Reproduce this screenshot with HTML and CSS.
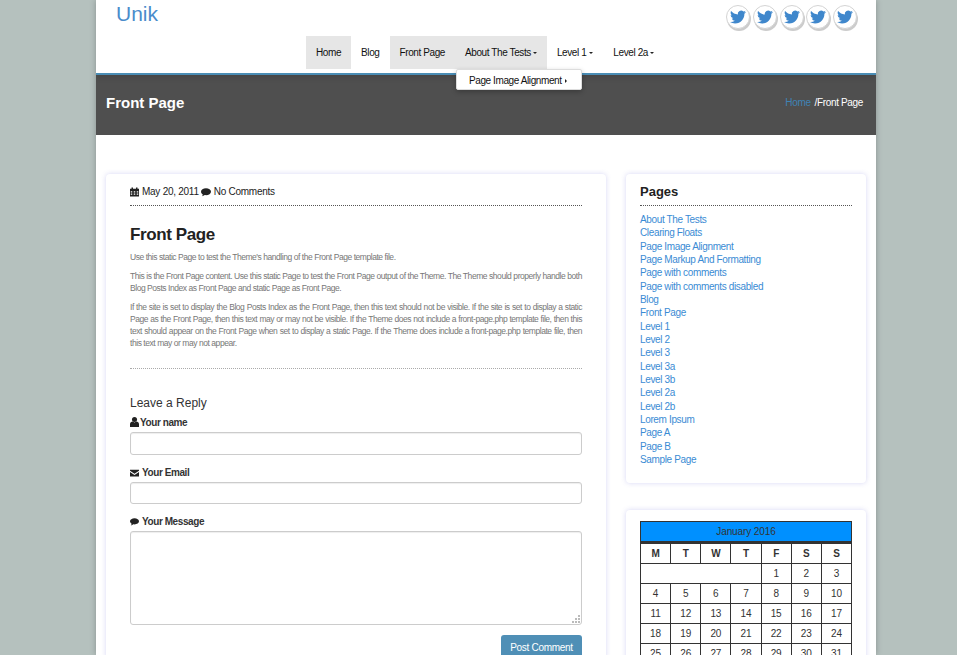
FILE: index.html
```html
<!DOCTYPE html>
<html lang="en">
<head>
<meta charset="utf-8">
<title>Front Page – Unik</title>
<link rel="stylesheet" href="styles.css">
</head>
<body>
<svg class="defs" width="0" height="0" aria-hidden="true">
  <defs>
    <symbol id="bird" viewBox="0 0 24 24"><path d="M23.953 4.57a10 10 0 01-2.825.775 4.958 4.958 0 002.163-2.723c-.951.555-2.005.959-3.127 1.184a4.92 4.92 0 00-8.384 4.482C7.69 8.095 4.067 6.13 1.64 3.162a4.822 4.822 0 00-.666 2.475c0 1.71.87 3.213 2.188 4.096a4.904 4.904 0 01-2.228-.616v.06a4.923 4.923 0 003.946 4.827 4.996 4.996 0 01-2.212.085 4.936 4.936 0 004.604 3.417 9.867 9.867 0 01-6.102 2.105c-.39 0-.779-.023-1.17-.067a13.995 13.995 0 007.557 2.209c9.053 0 13.998-7.496 13.998-13.985 0-.21 0-.42-.015-.63A9.935 9.935 0 0024 4.59z"/></symbol>
    <symbol id="bubble" viewBox="0 0 12 10"><path d="M6 0C2.7 0 0 1.8 0 4.1c0 1.3.9 2.5 2.2 3.2-.1.8-.6 1.6-1.2 2.2 1.3-.1 2.6-.6 3.5-1.4.5.1 1 .1 1.5.1 3.3 0 6-1.8 6-4.1S9.300 0 6 0z"/></symbol>
  </defs>
</svg>
<div class="page">
  <header class="site-header">
    <div class="brand-row">
      <a class="logo" href="#">Unik</a>
      <div class="social">
        <a class="soc" href="#"><svg><use href="#bird"/></svg></a>
        <a class="soc" href="#"><svg><use href="#bird"/></svg></a>
        <a class="soc" href="#"><svg><use href="#bird"/></svg></a>
        <a class="soc" href="#"><svg><use href="#bird"/></svg></a>
        <a class="soc" href="#"><svg><use href="#bird"/></svg></a>
      </div>
    </div>
    <nav class="nav">
      <a class="nav-item on" href="#">Home</a>
      <a class="nav-item" href="#">Blog</a>
      <a class="nav-item on" href="#">Front Page</a>
      <div class="nav-drop">
        <a class="nav-item on" href="#">About The Tests<i class="caret"></i></a>
        <div class="menu"><a href="#">Page Image Alignment<i class="caret-r"></i></a></div>
      </div>
      <a class="nav-item" href="#">Level 1<i class="caret sp"></i></a>
      <a class="nav-item" href="#">Level 2a<i class="caret"></i></a>
    </nav>
  </header>
  <section class="band">
    <h1>Front Page</h1>
    <div class="crumbs"><a href="#">Home</a><span>/Front Page</span></div>
  </section>
  <div class="columns">
    <main class="card main">
      <div class="meta">
        <svg class="ic" viewBox="0 0 12 12"><path d="M0 3h12v9H0zM2 0h2v2.500H2zM8 0h2v2.500H8zM0 1.500h12V3H0z"/><path fill="#fff" d="M1 5h2v1.500H1zM5 5h2v1.500H5zM9 5h2v1.500H9zM1 8h2v1.500H1zM5 8h2v1.500H5zM9 8h2v1.500H9z"/></svg>
        <span>May 20, 2011</span>
        <svg class="ic bub"><use href="#bubble"/></svg>
        <span>No Comments</span>
      </div>
      <h2>Front Page</h2>
      <div class="body">
        <p>Use this static Page to test the Theme's handling of the Front Page template file.</p>
        <p>This is the Front Page content. Use this static Page to test the Front Page output of the Theme. The Theme should properly handle both Blog Posts Index as Front Page and static Page as Front Page.</p>
        <p>If the site is set to display the Blog Posts Index as the Front Page, then this text should not be visible. If the site is set to display a static Page as the Front Page, then this text may or may not be visible. If the Theme does not include a front-page.php template file, then this text should appear on the Front Page when set to display a static Page. If the Theme does include a front-page.php template file, then this text may or may not appear.</p>
      </div>
      <div class="rule"></div>
      <h3>Leave a Reply</h3>
      <form class="form">
        <label><svg class="ic person" viewBox="0 0 10 11"><circle cx="5" cy="2.800" r="2.800"/><path d="M0 11V8c0-2 1.500-3 3-3l2 1 2-1c1.500 0 3 1 3 3v3z"/></svg>Your name</label>
        <div class="input"></div>
        <label><svg class="ic wide" viewBox="0 0 12 9"><path d="M0 0h12v1.500L6 5.500 0 1.500zM0 3l6 4 6-4v6H0z"/></svg>Your Email</label>
        <div class="input"></div>
        <label><svg class="ic wide"><use href="#bubble"/></svg>Your Message</label>
        <div class="input area"><svg class="grip" width="9" height="9"><path fill="#bbb" d="M7 1h2v2H7zM4 4h2v2H4zM7 4h2v2H7zM1 7h2v2H1zM4 7h2v2H4zM7 7h2v2H7z"/></svg></div>
        <div class="actions"><button type="button" class="btn">Post Comment</button></div>
      </form>
    </main>
    <aside class="side">
      <section class="card widget">
        <h4>Pages</h4>
        <ul class="links">
          <li><a href="#">About The Tests</a></li>
          <li><a href="#">Clearing Floats</a></li>
          <li><a href="#">Page Image Alignment</a></li>
          <li><a href="#">Page Markup And Formatting</a></li>
          <li><a href="#">Page with comments</a></li>
          <li><a href="#">Page with comments disabled</a></li>
          <li><a href="#">Blog</a></li>
          <li><a href="#">Front Page</a></li>
          <li><a href="#">Level 1</a></li>
          <li><a href="#">Level 2</a></li>
          <li><a href="#">Level 3</a></li>
          <li><a href="#">Level 3a</a></li>
          <li><a href="#">Level 3b</a></li>
          <li><a href="#">Level 2a</a></li>
          <li><a href="#">Level 2b</a></li>
          <li><a href="#">Lorem Ipsum</a></li>
          <li><a href="#">Page A</a></li>
          <li><a href="#">Page B</a></li>
          <li><a href="#">Sample Page</a></li>
        </ul>
      </section>
      <section class="card cal-card">
        <table class="cal">
          <caption>January 2016</caption>
          <thead><tr><th>M</th><th>T</th><th>W</th><th>T</th><th>F</th><th>S</th><th>S</th></tr></thead>
          <tbody>
            <tr><td colspan="4"></td><td>1</td><td>2</td><td>3</td></tr>
            <tr><td>4</td><td>5</td><td>6</td><td>7</td><td>8</td><td>9</td><td>10</td></tr>
            <tr><td>11</td><td>12</td><td>13</td><td>14</td><td>15</td><td>16</td><td>17</td></tr>
            <tr><td>18</td><td>19</td><td>20</td><td>21</td><td>22</td><td>23</td><td>24</td></tr>
            <tr><td>25</td><td>26</td><td>27</td><td>28</td><td>29</td><td>30</td><td>31</td></tr>
          </tbody>
        </table>
      </section>
    </aside>
  </div>
</div>
</body>
</html>
```
FILE: styles.css
```css
* { box-sizing: border-box; }
html, body { height: 655px; overflow: hidden; }
body { margin: 0; background: #b5c1be; font-family: "Liberation Sans", Arial, sans-serif; color: #222; }
a { text-decoration: none; color: inherit; }
.defs { display: block; height: 0; }
.page { width: 780px; margin: 0 0 0 96px; background: #fff; height: 655px; overflow: hidden; box-shadow: 0 0 6px rgba(0,0,0,.25); }

.site-header { height: 75px; border-bottom: 2px solid #4a8db5; box-shadow: 0 2px 6px rgba(0,0,0,.15); position: relative; }
.brand-row { height: 36px; display: flex; justify-content: space-between; align-items: flex-start; padding: 1px 19px 0 20px; }
.logo { font-size: 21px; line-height: 26px; color: #4a8ccb; }
.social { display: flex; gap: 2.700px; padding-top: 4px; }
.soc { width: 24px; height: 24px; border-radius: 50%; background: #fff; border: 1px solid #d4d4d4; box-shadow: 1px 2px 0 #ccc; display: flex; align-items: center; justify-content: center; }
.soc svg { width: 16px; height: 16px; fill: #3f87cc; }

.nav { display: flex; justify-content: flex-start; padding-left: 210px; height: 33px; font-size: 10px; letter-spacing: -.4px; }
.nav-item { display: block; height: 33px; line-height: 34px; padding: 0 10px; color: #111; white-space: nowrap; }
.nav-item.on { background: #e6e6e6; }
.nav-drop { position: relative; }
.caret { display: inline-block; width: 0; height: 0; border: 2px solid transparent; border-top-color: #222; border-bottom: 0; vertical-align: middle; margin-left: 2px; }
.caret.sp { margin-left: 3px; }
.menu { position: absolute; z-index: 5; left: 1px; top: 33px; width: 126px; height: 21px; background: #fff; border: 1px solid #ddd; box-shadow: 0 2px 5px rgba(0,0,0,.25); border-radius: 2px; line-height: 22px; padding-left: 12px; color: #111; white-space: nowrap; }
.caret-r { display: inline-block; width: 0; height: 0; border: 2px solid transparent; border-left-color: #222; border-right: 0; margin-left: 3px; vertical-align: middle; }

.band { height: 60px; background: #4f4f4f; display: flex; justify-content: space-between; align-items: center; padding: 0 13px 5px 10px; color: #fff; }
.band h1 { margin: 0; font-size: 15px; font-weight: bold; }
.crumbs { font-size: 10px; letter-spacing: -.35px; }
.crumbs a { color: #3f83b5; margin-right: 4px; }

.columns { display: flex; align-items: flex-start; gap: 20px; padding: 39px 10px 0; }
.card { background: #fff; border-radius: 4px; box-shadow: 0 0 5px rgba(120,120,220,.3); }
.main { width: 500px; padding: 11px 24px 0; flex: none; }
.meta { height: 21px; border-bottom: 1px dotted #555; font-size: 10px; letter-spacing: -.26px; line-height: 14px; color: #222; display: flex; align-items: flex-start; }
.ic { width: 9px; height: 10px; fill: #222; flex: none; margin-top: 2px; margin-right: 3px; }
.ic.bub { width: 10px; height: 9px; margin-top: 3px; }
.meta span { margin-right: 2px; }
h2 { margin: 19px 0 6px; font-size: 17px; letter-spacing: -.4px; line-height: 20px; color: #222; }
.body { font-size: 8.500px; letter-spacing: -.45px; line-height: 12px; color: #777; }
.body p { margin: 0 0 7px; text-align: justify; }
.rule { border-top: 1px dotted #aaa; margin-top: 19px; }
h3 { margin: 27px 0 7px; font-weight: normal; font-size: 12px; line-height: 14px; color: #333; }
.form label { display: block; font-size: 10px; letter-spacing: -.42px; font-weight: bold; line-height: 12px; color: #333; margin-bottom: 3px; }
.form label .ic { margin: 0 2px 0 0; vertical-align: -1px; display: inline-block; }
.form label .ic.person { margin-right: 1px; }
.form label .ic.wide { width: 9px; height: 8px; margin-right: 3px; }
.input { height: 22.500px; border: 1px solid #ccc; border-radius: 3px; margin-bottom: 12px; box-shadow: inset 0 1px 1px rgba(0,0,0,.07); }
.input.area { height: 94px; margin-bottom: 10px; position: relative; }
.grip { position: absolute; right: 1px; bottom: 1px; }
.actions { display: flex; justify-content: flex-end; }
.btn { font: 10px "Liberation Sans", Arial, sans-serif; letter-spacing: -.3px; width: 81px; height: 24px; border: 0; border-radius: 3px; background: #4f8fb6; color: #fff; padding: 0; }

.side { width: 240px; flex: none; display: flex; flex-direction: column; gap: 27px; }
.widget { padding: 11px 14px 17px; }
h4 { margin: 0 0 7px; padding-bottom: 6px; font-size: 13px; line-height: 14px; border-bottom: 1px dotted #555; color: #222; }
.links { margin: 0; padding: 0; list-style: none; font-size: 10px; letter-spacing: -.36px; line-height: 13.330px; color: #3a8bd4; }
.cal-card { padding: 11px 14px; }
.cal { width: 212px; border-collapse: collapse; table-layout: fixed; font-size: 10px; letter-spacing: -.1px; color: #333; }
.cal caption { height: 22px; line-height: 20px; background: #0090ff; border: 1px solid #333; color: #333; border-bottom-width: 2px; }
.cal th, .cal td { border: 1px solid #333; height: 20px; padding: 0; text-align: center; font-weight: normal; }
.cal th { font-weight: bold; height: 20px; }
```
